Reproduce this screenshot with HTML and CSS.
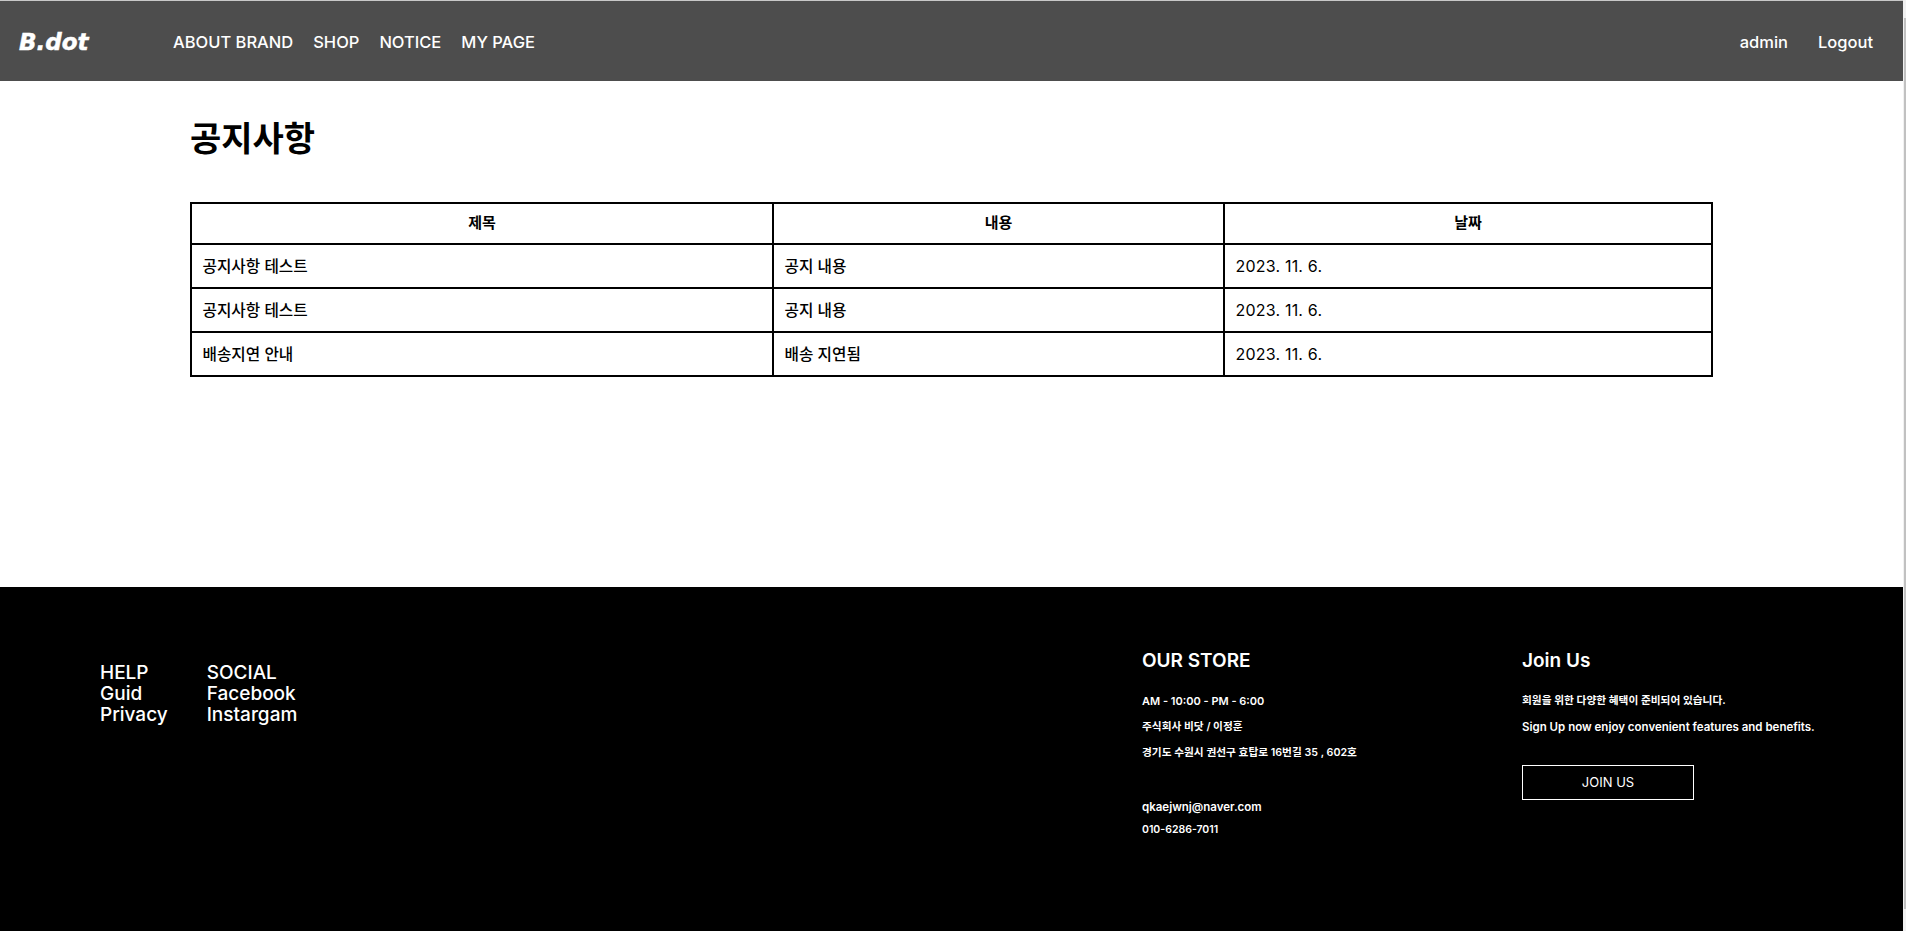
FILE: index.html
```html
<!DOCTYPE html>
<html lang="ko">
<head>
<meta charset="utf-8">
<title>B.dot</title>
<link rel="stylesheet" href="styles.css">
</head>
<body>
<div class="page">
<header class="topbar">
  <a class="logo">B.dot</a>
  <nav class="nav">
    <a>ABOUT BRAND</a><a>SHOP</a><a>NOTICE</a><a>MY PAGE</a>
  </nav>
  <div class="user"><a>admin</a><a>Logout</a></div>
</header>
<main class="content">
  <h1 class="title">공지사항</h1>
  <table class="board">
    <colgroup><col class="c1"><col class="c2"><col class="c3"></colgroup>
    <thead><tr><th>제목</th><th>내용</th><th>날짜</th></tr></thead>
    <tbody>
      <tr><td>공지사항 테스트</td><td>공지 내용</td><td class="date">2023. 11. 6.</td></tr>
      <tr><td>공지사항 테스트</td><td>공지 내용</td><td class="date">2023. 11. 6.</td></tr>
      <tr><td>배송지연 안내</td><td>배송 지연됨</td><td class="date">2023. 11. 6.</td></tr>
    </tbody>
  </table>
</main>
<footer class="footer">
  <div class="links">
    <ul><li>HELP</li><li>Guid</li><li>Privacy</li></ul>
    <ul><li>SOCIAL</li><li>Facebook</li><li>Instargam</li></ul>
  </div>
  <section class="store">
    <h2>OUR STORE</h2>
    <p>AM - 10:00 - PM - 6:00</p>
    <p class="ko">주식회사 비닷 / 이정훈</p>
    <p class="ko">경기도 수원시 권선구 효탑로 16번길 35 , 602호</p>
    <p class="mail">qkaejwnj@naver.com</p>
    <p class="tel">010-6286-7011</p>
  </section>
  <section class="join">
    <h2>Join Us</h2>
    <p class="ko">회원을 위한 다양한 혜택이 준비되어 있습니다.</p>
    <p class="en">Sign Up now enjoy convenient features and benefits.</p>
    <a class="btn">JOIN US</a>
  </section>
</footer>
</div>
<div class="scrollbar"><div class="thumb"></div></div>
</body>
</html>
```
FILE: styles.css
```css
* { box-sizing: border-box; }
html, body { margin: 0; padding: 0; background: #fff; }
body {
  height: 931px;
  overflow: hidden;
  display: flex;
  font-family: Inter, "Noto Sans CJK KR", sans-serif;
  color: #000;
}
.page {
  width: 1903px;
  height: 931px;
  flex: none;
  display: flex;
  flex-direction: column;
  border-top: 1px solid #c8c8c8;
}
.scrollbar {
  flex: 1;
  background: #f1f1f1;
  padding: 18px 0 22px 1px;
  display: flex;
}
.thumb { flex: 1; background: #c1c1c1; }
.topbar {
  height: 80px;
  flex: none;
  background: #4d4d4d;
  color: #fff;
  display: flex;
  align-items: center;
  padding: 1px 30px 0 19px;
}
.logo {
  font-family: "DejaVu Sans", sans-serif;
  font-weight: 700;
  font-style: italic;
  font-size: 23px;
  width: 154px;
  -webkit-text-stroke: 0.5px #fff;
}
.nav { display: flex; gap: 20px; font-size: 16.5px; font-weight: 500; }
.user { margin-left: auto; display: flex; gap: 30px; font-size: 16.5px; font-weight: 500; }
.content { flex: 1; padding: 37px 190px 0; }
.title { margin: 0 0 42px; font-size: 34px; line-height: 42px; font-weight: 700; }
.board {
  width: 1523px;
  border-collapse: collapse;
  table-layout: fixed;
  font-size: 15.7px;
  border: 2px solid #000;
}
.c1 { width: 582px; }
.c2 { width: 451px; }
.board th, .board td { border: 2px solid #000; padding: 0 10.5px; text-align: left; font-weight: 500; height: 44px; line-height: 20px; }
.board th { text-align: center; font-weight: 700; height: 41px; font-size: 15px; padding-bottom: 1px; }
.board td { padding-top: 1px; }
.board .date { font-size: 16px; font-weight: 400; letter-spacing: 0.2px; padding-top: 0; }
.footer {
  height: 344px;
  flex: none;
  background: #000;
  color: #fff;
  display: flex;
  padding: 59px 0 0 100px;
}
.links { display: flex; gap: 39px; width: 1042px; font-size: 19px; line-height: 21px; padding-top: 16px; font-weight: 500; }
.links ul { margin: 0; padding: 0; list-style: none; }
.store { width: 380px; }
.footer h2 { margin: 0 0 16px; font-size: 19px; line-height: 30px; font-weight: 600; }
.footer p { margin: 0 0 8px; font-size: 11px; line-height: 18px; font-weight: 600; }
.footer .ko { font-size: 10.7px; }
.footer .en { font-size: 11.5px; }
.store .mail { margin: 36px 0 5px; font-size: 11.5px; }
.store .tel { font-size: 10.5px; }
.btn {
  display: block;
  width: 172px;
  height: 35px;
  margin-top: 29px;
  border: 1px solid #fff;
  font-size: 13px;
  line-height: 33px;
  text-align: center;
}
```
